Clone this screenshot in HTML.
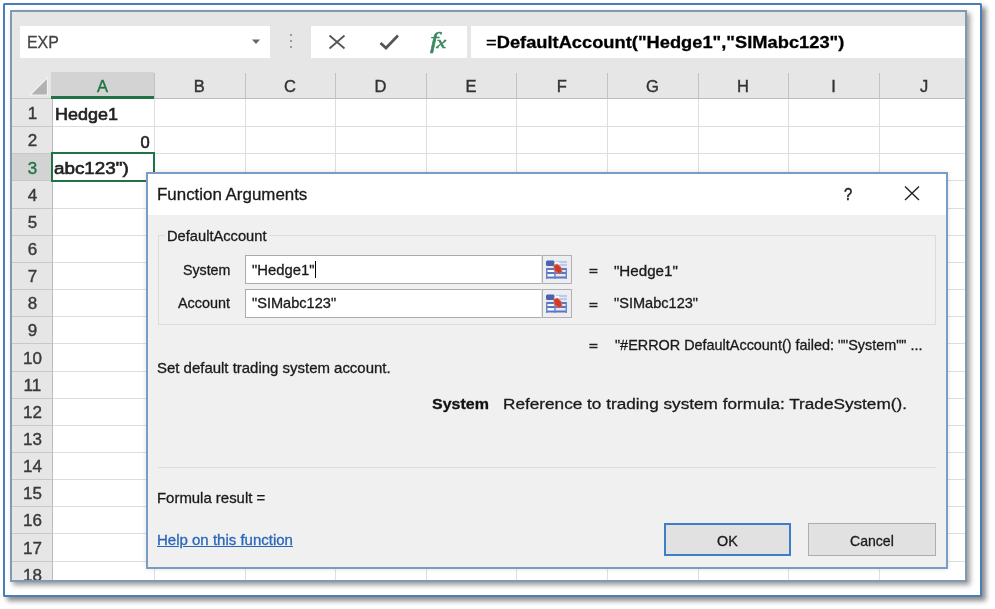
<!DOCTYPE html>
<html><head><meta charset="utf-8"><title>Function Arguments</title>
<style>
html,body{margin:0;padding:0;background:#fff;}
body{width:995px;height:609px;position:relative;overflow:hidden;font-family:"Liberation Sans",sans-serif;}
.frame{position:absolute;left:3px;top:3px;width:979px;height:594px;box-sizing:border-box;border:2px solid #4a7ebb;background:#fff;box-shadow:4px 4px 5px rgba(0,0,0,.45);border-radius:1.5px;}
.inner{position:absolute;left:10px;top:10px;width:957px;height:572px;box-sizing:border-box;border:2px solid #7f9ab5;background:#e6e6e6;box-shadow:3px 3px 5px rgba(0,0,0,.4);overflow:hidden;}
.cv{position:absolute;left:-12px;top:-12px;width:995px;height:609px;filter:blur(0.6px);}
.cv div,.cv span,.cv svg{position:absolute;box-sizing:border-box;}
.t{-webkit-text-stroke-width:0.3px;line-height:1;white-space:pre;transform-origin:0 50%;font-family:"Liberation Sans",sans-serif;}
.t b{font-weight:bold;}
.box{background:#fff;}
.hl{background:#d9d9d9;}
.vl{width:1px;background:#dedede;}
.h{height:1px;background:#dedede;}
.btn{background:#e1e1e1;border:1px solid #adadad;}

</style></head>
<body>
<div class="frame"></div>
<div class="inner"><div class="cv">
<div class="box" style="left:19.5px;top:26px;width:250px;height:31.5px;"></div>
<div class="box" style="left:311px;top:26px;width:155.5px;height:31.5px;"></div>
<div class="box" style="left:471px;top:26px;width:500px;height:31.5px;"></div>
<svg style="left:251px;top:39px" width="10" height="6" viewBox="0 0 10 6"><path d="M1 0.5 L9 0.5 L5 5 Z" fill="#666"/></svg>
<div style="left:289.5px;top:34px;width:2px;height:2px;background:#9a9a9a"></div>
<div style="left:289.5px;top:40px;width:2px;height:2px;background:#9a9a9a"></div>
<div style="left:289.5px;top:46px;width:2px;height:2px;background:#9a9a9a"></div>
<svg style="left:327px;top:33px" width="20" height="18" viewBox="0 0 20 18"><path d="M2.5 2.5 L17.5 15.5 M17.5 2.5 L2.5 15.5" stroke="#555" stroke-width="1.8" fill="none"/></svg>
<svg style="left:378px;top:33px" width="22" height="18" viewBox="0 0 22 18"><path d="M2.5 10 L8 15 L20 2.5" stroke="#555" stroke-width="2.7" fill="none"/></svg>
<span style="left:429.5px;top:28.5px;font-family:'Liberation Serif',serif;font-style:italic;line-height:1;color:#3c8a5e;-webkit-text-stroke:0.5px #3c8a5e;white-space:pre;letter-spacing:-1.5px;transform:scaleX(1.3);transform-origin:0 0"><span style="position:static;font-size:23px">f</span><span style="position:static;font-size:17.5px">x</span></span>
<div class="box" style="left:52px;top:99px;width:920px;height:490px;"></div>
<div style="left:51px;top:72px;width:103px;height:24.5px;background:#d3d3d3"></div>
<div style="left:51px;top:96px;width:104px;height:3px;background:#217346"></div>
<div style="left:155px;top:98px;width:820px;height:1px;background:#bcbcbc"></div>
<div style="left:12px;top:98px;width:39px;height:1px;background:#c8c8c8"></div>
<svg style="left:28px;top:76px" width="22" height="21" viewBox="0 0 22 21"><path d="M19.5 1.5 L19.5 19 L2 19 Z" fill="#b2b2b2" stroke="#f2f2f2" stroke-width="1.2"/></svg>
<div style="left:154.0px;top:73px;width:1px;height:26px;background:#c2c2c2"></div>
<div class="vl" style="left:154.0px;top:99px;height:490px;"></div>
<div style="left:244.6px;top:73px;width:1px;height:26px;background:#c2c2c2"></div>
<div class="vl" style="left:244.6px;top:99px;height:490px;"></div>
<div style="left:335.2px;top:73px;width:1px;height:26px;background:#c2c2c2"></div>
<div class="vl" style="left:335.2px;top:99px;height:490px;"></div>
<div style="left:425.8px;top:73px;width:1px;height:26px;background:#c2c2c2"></div>
<div class="vl" style="left:425.8px;top:99px;height:490px;"></div>
<div style="left:516.4px;top:73px;width:1px;height:26px;background:#c2c2c2"></div>
<div class="vl" style="left:516.4px;top:99px;height:490px;"></div>
<div style="left:607.0px;top:73px;width:1px;height:26px;background:#c2c2c2"></div>
<div class="vl" style="left:607.0px;top:99px;height:490px;"></div>
<div style="left:697.6px;top:73px;width:1px;height:26px;background:#c2c2c2"></div>
<div class="vl" style="left:697.6px;top:99px;height:490px;"></div>
<div style="left:788.2px;top:73px;width:1px;height:26px;background:#c2c2c2"></div>
<div class="vl" style="left:788.2px;top:99px;height:490px;"></div>
<div style="left:878.8px;top:73px;width:1px;height:26px;background:#c2c2c2"></div>
<div class="vl" style="left:878.8px;top:99px;height:490px;"></div>
<div style="left:969.4px;top:73px;width:1px;height:26px;background:#c2c2c2"></div>
<div class="vl" style="left:969.4px;top:99px;height:490px;"></div>
<div style="left:12px;top:99px;width:40px;height:490px;background:#e6e6e6"></div>
<div style="left:51.5px;top:99px;width:1px;height:490px;background:#bcbcbc"></div>
<div style="left:12px;top:154.3px;width:39.5px;height:26.1px;background:#d3d3d3"></div>
<div class="h" style="left:53px;top:126.2px;width:920px;"></div>
<div style="left:12px;top:126.2px;width:39.5px;height:1px;background:#c8c8c8"></div>
<div class="h" style="left:53px;top:153.3px;width:920px;"></div>
<div style="left:12px;top:153.3px;width:39.5px;height:1px;background:#c8c8c8"></div>
<div class="h" style="left:53px;top:180.4px;width:920px;"></div>
<div style="left:12px;top:180.4px;width:39.5px;height:1px;background:#c8c8c8"></div>
<div class="h" style="left:53px;top:207.6px;width:920px;"></div>
<div style="left:12px;top:207.6px;width:39.5px;height:1px;background:#c8c8c8"></div>
<div class="h" style="left:53px;top:234.8px;width:920px;"></div>
<div style="left:12px;top:234.8px;width:39.5px;height:1px;background:#c8c8c8"></div>
<div class="h" style="left:53px;top:261.9px;width:920px;"></div>
<div style="left:12px;top:261.9px;width:39.5px;height:1px;background:#c8c8c8"></div>
<div class="h" style="left:53px;top:289.0px;width:920px;"></div>
<div style="left:12px;top:289.0px;width:39.5px;height:1px;background:#c8c8c8"></div>
<div class="h" style="left:53px;top:316.2px;width:920px;"></div>
<div style="left:12px;top:316.2px;width:39.5px;height:1px;background:#c8c8c8"></div>
<div class="h" style="left:53px;top:343.4px;width:920px;"></div>
<div style="left:12px;top:343.4px;width:39.5px;height:1px;background:#c8c8c8"></div>
<div class="h" style="left:53px;top:370.5px;width:920px;"></div>
<div style="left:12px;top:370.5px;width:39.5px;height:1px;background:#c8c8c8"></div>
<div class="h" style="left:53px;top:397.6px;width:920px;"></div>
<div style="left:12px;top:397.6px;width:39.5px;height:1px;background:#c8c8c8"></div>
<div class="h" style="left:53px;top:424.8px;width:920px;"></div>
<div style="left:12px;top:424.8px;width:39.5px;height:1px;background:#c8c8c8"></div>
<div class="h" style="left:53px;top:451.9px;width:920px;"></div>
<div style="left:12px;top:451.9px;width:39.5px;height:1px;background:#c8c8c8"></div>
<div class="h" style="left:53px;top:479.1px;width:920px;"></div>
<div style="left:12px;top:479.1px;width:39.5px;height:1px;background:#c8c8c8"></div>
<div class="h" style="left:53px;top:506.2px;width:920px;"></div>
<div style="left:12px;top:506.2px;width:39.5px;height:1px;background:#c8c8c8"></div>
<div class="h" style="left:53px;top:533.4px;width:920px;"></div>
<div style="left:12px;top:533.4px;width:39.5px;height:1px;background:#c8c8c8"></div>
<div class="h" style="left:53px;top:560.5px;width:920px;"></div>
<div style="left:12px;top:560.5px;width:39.5px;height:1px;background:#c8c8c8"></div>
<div class="h" style="left:53px;top:587.7px;width:920px;"></div>
<div style="left:12px;top:587.7px;width:39.5px;height:1px;background:#c8c8c8"></div>
<div style="left:51px;top:152.4px;width:104px;height:29.6px;border:2px solid #217346;background:#fff"></div>
<div style="left:146px;top:172px;width:802px;height:396.5px;border:2px solid #7a9dc8;background:#f0f0f0;box-shadow:0 0 5px rgba(0,0,0,.12)"></div>
<div style="left:148px;top:174px;width:798px;height:41px;background:#fff"></div>
<svg style="left:903px;top:184px" width="18" height="18" viewBox="0 0 18 18"><path d="M2 2.5 L16 16 M16 2.5 L2 16" stroke="#222" stroke-width="1.4" fill="none"/></svg>
<div style="left:158px;top:235px;width:778px;height:90px;border:1px solid #dcdcdc;"></div>
<div style="left:165px;top:230px;width:104px;height:12px;background:#f0f0f0"></div>
<div style="left:245px;top:255px;width:296.5px;height:29px;border:1px solid #ababab;border-right-color:#e4e4e4;background:#fff"></div>
<div style="left:245px;top:289px;width:296.5px;height:29px;border:1px solid #ababab;border-right-color:#e4e4e4;background:#fff"></div>
<div style="left:315px;top:261px;width:1px;height:17px;background:#000"></div>
<div style="left:542px;top:255px;width:30px;height:28.5px;background:#eceef2;border:1px solid #b0b0b0"></div>
<svg style="left:546px;top:259.5px" width="21" height="19" viewBox="0 0 21 19">
<rect x="0" y="0" width="21" height="19" fill="#e3e9f6"/>
<rect x="0" y="0.5" width="8.5" height="5.5" rx="1.5" fill="#4d62aa"/>
<path d="M10 2 H21 M10 5 H21" stroke="#b4c0e2" stroke-width="1.4"/>
<path d="M0 9 H21 M0 13 H21 M0 17.5 H21" stroke="#5b76bd" stroke-width="2.2"/>
<path d="M0.7 8 V19 M20.3 8 V19 M9 8 V19" stroke="#6a84c6" stroke-width="1.4"/>
<rect x="2" y="10.4" width="5.5" height="1.6" fill="#fff"/><rect x="2" y="14.4" width="5.5" height="1.8" fill="#fff"/>
<ellipse cx="11" cy="3.6" rx="2.6" ry="1.8" fill="#fff"/>
<path d="M7.5 5.5 L11.5 4 L15 7.5 L16 11.5 L13.5 14 L9 11 Z" fill="#d23c26" stroke="#e2705c" stroke-width="0.8"/>
</svg>
<div style="left:542px;top:289px;width:30px;height:28.5px;background:#eceef2;border:1px solid #b0b0b0"></div>
<svg style="left:546px;top:293.5px" width="21" height="19" viewBox="0 0 21 19">
<rect x="0" y="0" width="21" height="19" fill="#e3e9f6"/>
<rect x="0" y="0.5" width="8.5" height="5.5" rx="1.5" fill="#4d62aa"/>
<path d="M10 2 H21 M10 5 H21" stroke="#b4c0e2" stroke-width="1.4"/>
<path d="M0 9 H21 M0 13 H21 M0 17.5 H21" stroke="#5b76bd" stroke-width="2.2"/>
<path d="M0.7 8 V19 M20.3 8 V19 M9 8 V19" stroke="#6a84c6" stroke-width="1.4"/>
<rect x="2" y="10.4" width="5.5" height="1.6" fill="#fff"/><rect x="2" y="14.4" width="5.5" height="1.8" fill="#fff"/>
<ellipse cx="11" cy="3.6" rx="2.6" ry="1.8" fill="#fff"/>
<path d="M7.5 5.5 L11.5 4 L15 7.5 L16 11.5 L13.5 14 L9 11 Z" fill="#d23c26" stroke="#e2705c" stroke-width="0.8"/>
</svg>
<div style="left:158px;top:467px;width:778px;height:1px;background:#dcdcdc"></div>
<div class="btn" style="left:664px;top:523px;width:127px;height:33px;border:2px solid #3a80c8"></div>
<div class="btn" style="left:808px;top:523px;width:127.5px;height:33px;"></div>
<span class="t" id="t0" style="font-size:16.5px;top:34.43px;color:#444;left:26.85px;transform:scaleX(0.9644);">EXP</span>
<span class="t" id="t1" style="font-size:17px;top:34.11px;color:#000;left:486.37px;transform:scaleX(1.0756);">=<b>DefaultAccount("Hedge1","SIMabc123")</b></span>
<span class="t" id="t2" style="font-size:16.5px;top:78.03px;color:#217346;-webkit-text-stroke:0.4px #217346;left:52.50px;width:100px;text-align:center;">A</span>
<span class="t" id="t3" style="font-size:16.5px;top:78.03px;color:#333;-webkit-text-stroke:0.4px #333;left:149.30px;width:100px;text-align:center;">B</span>
<span class="t" id="t4" style="font-size:16.5px;top:78.03px;color:#333;-webkit-text-stroke:0.4px #333;left:239.90px;width:100px;text-align:center;">C</span>
<span class="t" id="t5" style="font-size:16.5px;top:78.03px;color:#333;-webkit-text-stroke:0.4px #333;left:330.50px;width:100px;text-align:center;">D</span>
<span class="t" id="t6" style="font-size:16.5px;top:78.03px;color:#333;-webkit-text-stroke:0.4px #333;left:421.10px;width:100px;text-align:center;">E</span>
<span class="t" id="t7" style="font-size:16.5px;top:78.03px;color:#333;-webkit-text-stroke:0.4px #333;left:511.70px;width:100px;text-align:center;">F</span>
<span class="t" id="t8" style="font-size:16.5px;top:78.03px;color:#333;-webkit-text-stroke:0.4px #333;left:602.30px;width:100px;text-align:center;">G</span>
<span class="t" id="t9" style="font-size:16.5px;top:78.03px;color:#333;-webkit-text-stroke:0.4px #333;left:692.90px;width:100px;text-align:center;">H</span>
<span class="t" id="t10" style="font-size:16.5px;top:78.03px;color:#333;-webkit-text-stroke:0.4px #333;left:783.50px;width:100px;text-align:center;">I</span>
<span class="t" id="t11" style="font-size:16.5px;top:78.03px;color:#333;-webkit-text-stroke:0.4px #333;left:874.10px;width:100px;text-align:center;">J</span>
<span class="t" id="t12" style="font-size:17px;top:105.21px;color:#3a3a3a;-webkit-text-stroke:0.4px #3a3a3a;left:-17.60px;width:100px;text-align:center;">1</span>
<span class="t" id="t13" style="font-size:17px;top:132.36px;color:#3a3a3a;-webkit-text-stroke:0.4px #3a3a3a;left:-17.60px;width:100px;text-align:center;">2</span>
<span class="t" id="t14" style="font-size:17px;top:159.51px;color:#217346;-webkit-text-stroke:0.4px #217346;left:-17.60px;width:100px;text-align:center;">3</span>
<span class="t" id="t15" style="font-size:17px;top:186.66px;color:#3a3a3a;-webkit-text-stroke:0.4px #3a3a3a;left:-17.60px;width:100px;text-align:center;">4</span>
<span class="t" id="t16" style="font-size:17px;top:213.81px;color:#3a3a3a;-webkit-text-stroke:0.4px #3a3a3a;left:-17.60px;width:100px;text-align:center;">5</span>
<span class="t" id="t17" style="font-size:17px;top:240.96px;color:#3a3a3a;-webkit-text-stroke:0.4px #3a3a3a;left:-17.60px;width:100px;text-align:center;">6</span>
<span class="t" id="t18" style="font-size:17px;top:268.11px;color:#3a3a3a;-webkit-text-stroke:0.4px #3a3a3a;left:-17.60px;width:100px;text-align:center;">7</span>
<span class="t" id="t19" style="font-size:17px;top:295.26px;color:#3a3a3a;-webkit-text-stroke:0.4px #3a3a3a;left:-17.60px;width:100px;text-align:center;">8</span>
<span class="t" id="t20" style="font-size:17px;top:322.41px;color:#3a3a3a;-webkit-text-stroke:0.4px #3a3a3a;left:-17.60px;width:100px;text-align:center;">9</span>
<span class="t" id="t21" style="font-size:17px;top:349.56px;color:#3a3a3a;-webkit-text-stroke:0.4px #3a3a3a;left:-17.60px;width:100px;text-align:center;">10</span>
<span class="t" id="t22" style="font-size:17px;top:376.71px;color:#3a3a3a;-webkit-text-stroke:0.4px #3a3a3a;left:-17.60px;width:100px;text-align:center;">11</span>
<span class="t" id="t23" style="font-size:17px;top:403.86px;color:#3a3a3a;-webkit-text-stroke:0.4px #3a3a3a;left:-17.60px;width:100px;text-align:center;">12</span>
<span class="t" id="t24" style="font-size:17px;top:431.01px;color:#3a3a3a;-webkit-text-stroke:0.4px #3a3a3a;left:-17.60px;width:100px;text-align:center;">13</span>
<span class="t" id="t25" style="font-size:17px;top:458.16px;color:#3a3a3a;-webkit-text-stroke:0.4px #3a3a3a;left:-17.60px;width:100px;text-align:center;">14</span>
<span class="t" id="t26" style="font-size:17px;top:485.31px;color:#3a3a3a;-webkit-text-stroke:0.4px #3a3a3a;left:-17.60px;width:100px;text-align:center;">15</span>
<span class="t" id="t27" style="font-size:17px;top:512.46px;color:#3a3a3a;-webkit-text-stroke:0.4px #3a3a3a;left:-17.60px;width:100px;text-align:center;">16</span>
<span class="t" id="t28" style="font-size:17px;top:539.61px;color:#3a3a3a;-webkit-text-stroke:0.4px #3a3a3a;left:-17.60px;width:100px;text-align:center;">17</span>
<span class="t" id="t29" style="font-size:17px;top:566.76px;color:#3a3a3a;-webkit-text-stroke:0.4px #3a3a3a;left:-17.60px;width:100px;text-align:center;">18</span>
<span class="t" id="t30" style="font-size:16px;top:106.76px;color:#222;-webkit-text-stroke:0.6px #222;left:55.27px;transform:scaleX(1.1216);">Hedge1</span>
<span class="t" id="t31" style="font-size:16.5px;top:133.53px;color:#222;-webkit-text-stroke:0.6px #222;left:49.60px;width:100px;text-align:right;">0</span>
<span class="t" id="t32" style="font-size:16px;top:161.46px;color:#222;-webkit-text-stroke:0.6px #222;left:54.30px;transform:scaleX(1.1770);">abc123")</span>
<span class="t" id="t33" style="font-size:16.5px;top:186.03px;color:#1a1a1a;left:156.97px;transform:scaleX(1.0244);">Function Arguments</span>
<span class="t" id="t34" style="font-size:17px;top:185.91px;color:#222;-webkit-text-stroke:0.5px #222;left:843.87px;transform:scaleX(0.8677);">?</span>
<span class="t" id="t35" style="font-size:14.2px;top:228.98px;color:#1a1a1a;left:167.33px;transform:scaleX(1.0340);">DefaultAccount</span>
<span class="t" id="t36" style="font-size:14.2px;top:262.98px;color:#1a1a1a;left:183.06px;transform:scaleX(1.0009);">System</span>
<span class="t" id="t37" style="font-size:14.2px;top:296.48px;color:#1a1a1a;left:177.86px;transform:scaleX(1.0132);">Account</span>
<span class="t" id="t38" style="font-size:14.2px;top:262.98px;color:#1a1a1a;left:251.65px;transform:scaleX(1.0446);">"Hedge1"</span>
<span class="t" id="t39" style="font-size:14.2px;top:296.48px;color:#1a1a1a;left:251.67px;transform:scaleX(1.0273);">"SIMabc123"</span>
<span class="t" id="t40" style="font-size:13px;top:264.20px;color:#222;-webkit-text-stroke:0.5px #222;left:589.18px;transform:scaleX(1.1693);">=</span>
<span class="t" id="t41" style="font-size:13px;top:297.70px;color:#222;-webkit-text-stroke:0.5px #222;left:589.18px;transform:scaleX(1.1693);">=</span>
<span class="t" id="t42" style="font-size:13px;top:338.80px;color:#222;-webkit-text-stroke:0.5px #222;left:589.18px;transform:scaleX(1.1693);">=</span>
<span class="t" id="t43" style="font-size:14.2px;top:263.78px;color:#1a1a1a;left:614.25px;transform:scaleX(1.0672);">"Hedge1"</span>
<span class="t" id="t44" style="font-size:14.2px;top:296.48px;color:#1a1a1a;left:614.29px;transform:scaleX(1.0267);">"SIMabc123"</span>
<span class="t" id="t45" style="font-size:14.2px;top:337.58px;color:#1a1a1a;left:614.71px;transform:scaleX(1.0156);">"#ERROR DefaultAccount() failed: ""System"" ...</span>
<span class="t" id="t46" style="font-size:14.2px;top:360.58px;color:#1a1a1a;left:156.55px;transform:scaleX(1.0542);">Set default trading system account.</span>
<span class="t" id="t47" style="font-size:15.5px;top:396.38px;color:#111;font-weight:bold;left:432.08px;transform:scaleX(1.0327);">System</span>
<span class="t" id="t48" style="font-size:15.5px;top:396.38px;color:#1a1a1a;left:503.17px;transform:scaleX(1.1086);">Reference to trading system formula: TradeSystem().</span>
<span class="t" id="t49" style="font-size:14.2px;top:490.58px;color:#1a1a1a;left:157.31px;transform:scaleX(1.0516);">Formula result =</span>
<span class="t" id="t50" style="font-size:14.2px;top:533.38px;color:#2a66b8;text-decoration:underline;left:157.47px;transform:scaleX(1.0575);">Help on this function</span>
<span class="t" id="t51" style="font-size:14.2px;top:533.58px;color:#1a1a1a;left:717.02px;transform:scaleX(1.0095);">OK</span>
<span class="t" id="t52" style="font-size:14.2px;top:533.58px;color:#1a1a1a;left:850.48px;transform:scaleX(0.9922);">Cancel</span>
</div></div>
</body></html>
